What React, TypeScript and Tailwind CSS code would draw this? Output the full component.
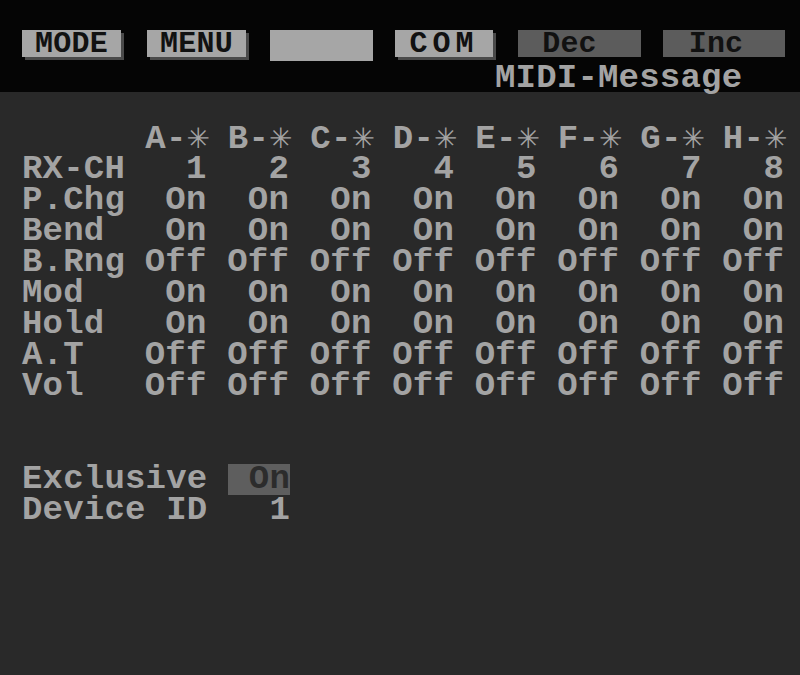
import React from 'react';

// Channel columns A..H with their receive channel numbers
const CHANNELS = ['A', 'B', 'C', 'D', 'E', 'F', 'G', 'H'];

const ROWS: { label: string; value: string }[] = [
  { label: 'P.Chg', value: 'On' },
  { label: 'Bend', value: 'On' },
  { label: 'B.Rng', value: 'Off' },
  { label: 'Mod', value: 'On' },
  { label: 'Hold', value: 'On' },
  { label: 'A.T', value: 'Off' },
  { label: 'Vol', value: 'Off' },
];

const Button: React.FC<{ label?: string; className?: string }> = ({ label, className }) => (
  <div
    className={`h-[27px] flex items-center justify-center text-[#111] text-[30px] leading-none ${className ?? ''}`}
  >
    {label}
  </div>
);

export default function App() {
  return (
    <div className="w-[800px] h-[675px] overflow-hidden bg-[#292929] text-[#a3a3a3] font-['Liberation_Mono',monospace] font-bold text-[34px] tracking-[0.2px] whitespace-pre">
      {/* top bar */}
      <div className="h-[92px] bg-[#050505] pt-[30px]">
        <div className="flex">
          <Button label="MODE" className="ml-[22px] w-[99px] bg-[#a6a6a6] shadow-[3px_3px_0_#4a4a4a]" />
          <Button label="MENU" className="ml-[26px] w-[99px] bg-[#a6a6a6] shadow-[3px_3px_0_#4a4a4a]" />
          <Button className="ml-[24px] w-[103px] h-[31px] bg-[#a6a6a6]" />
          <Button label="COM" className="ml-[22px] w-[98px] bg-[#a6a6a6] tracking-[5px] shadow-[3px_3px_0_#4a4a4a]" />
          <Button label="Dec" className="ml-[25px] w-[123px] h-[26px] bg-[#5c5c5c] pr-[20px]" />
          <Button label="Inc" className="ml-[22px] w-[122px] h-[26px] bg-[#5c5c5c] pr-[16px]" />
        </div>
        <div className="pl-[495px] leading-[31px] mt-[2px]">MIDI-Message</div>
      </div>

      {/* channel table */}
      <div className="pt-[31px] pl-[22px] leading-[31px]">
        <div className="grid grid-cols-[102px_repeat(8,82.5px)]">
          <div className="h-[31px]" />
          {CHANNELS.map((c) => (
            <div key={c} className="text-right h-[31px] pt-[1px]">
              {c}-<span className="inline-block w-[20px] text-left font-['DejaVu_Sans',sans-serif] font-bold text-[28px] leading-none">{'\u2733\uFE0E'}</span>
            </div>
          ))}
          <div className="whitespace-nowrap overflow-visible">RX-CH</div>
          {CHANNELS.map((c, i) => (
            <div key={`n-${c}`} className="text-right">{i + 1}</div>
          ))}
          {ROWS.map((row) => (
            <React.Fragment key={row.label}>
              <div>{row.label}</div>
              {CHANNELS.map((c) => (
                <div key={`${row.label}-${c}`} className="text-right">{row.value}</div>
              ))}
            </React.Fragment>
          ))}
        </div>

        {/* system exclusive */}
        <div className="mt-[62px] grid grid-cols-[206px_62px]">
          <div>Exclusive</div>
          <div className="text-right bg-[#5e5e5e] text-[#2c2c2c]">On</div>
          <div>Device ID</div>
          <div className="text-right">1</div>
        </div>
      </div>
    </div>
  );
}
